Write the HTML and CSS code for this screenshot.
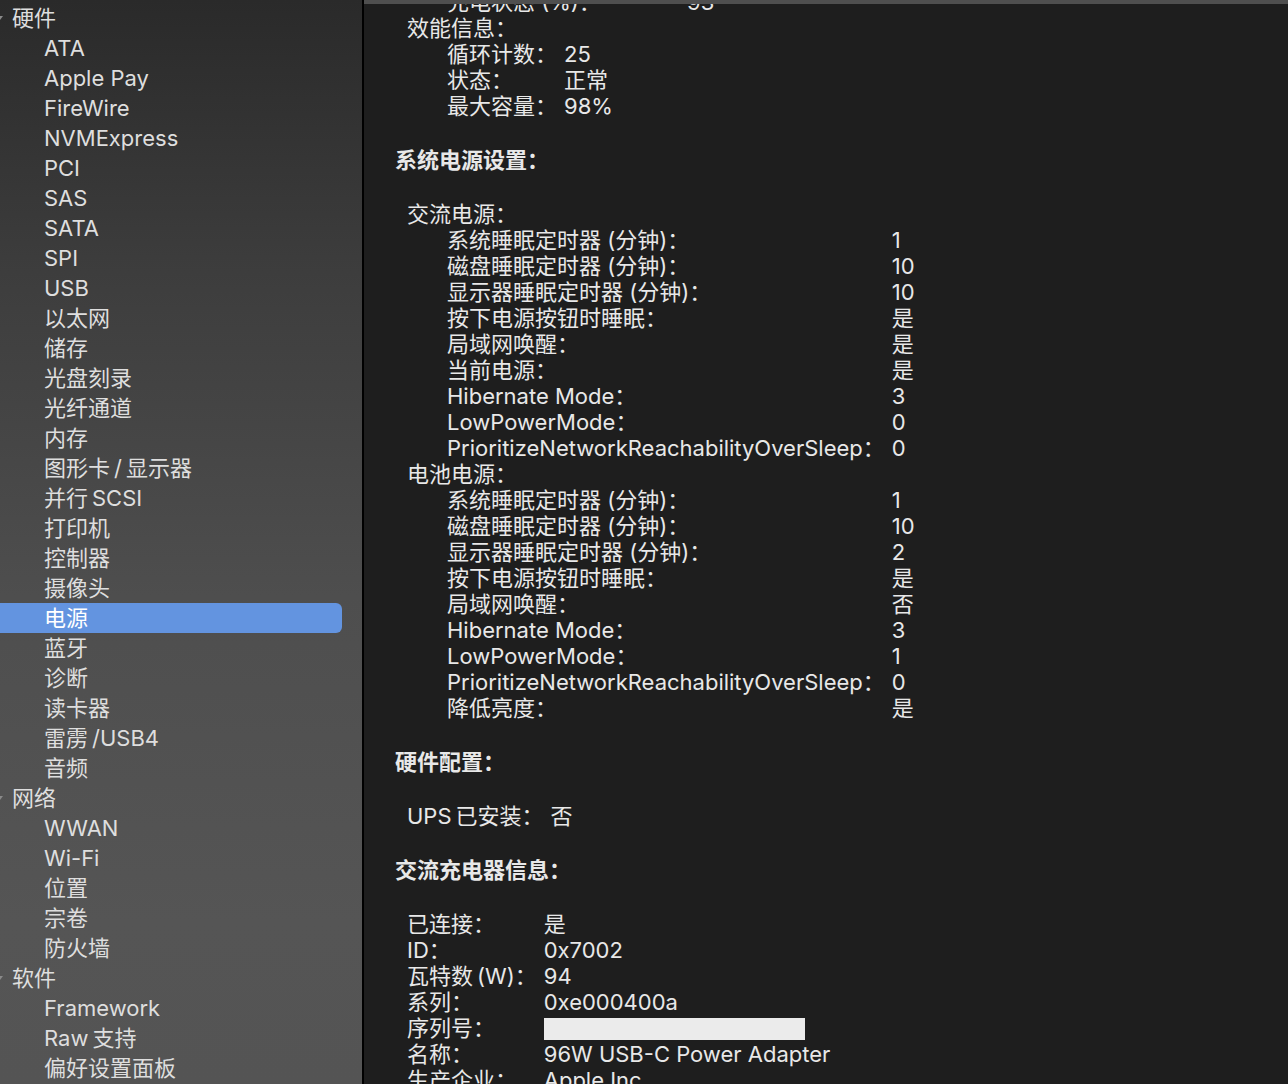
FILE: index.html
```html
<!DOCTYPE html>
<html lang="zh-CN">

<head>
    <meta charset="UTF-8">
    <title>系统信息 – 电源</title>
    <link rel="stylesheet" href="styles.css">
</head>

<body>

    <div class="window">
        <nav class="sidebar">
            <div class="row head"><span class="tri"></span>硬件</div>
            <div class="row">ATA</div>
            <div class="row">Apple Pay</div>
            <div class="row">FireWire</div>
            <div class="row">NVMExpress</div>
            <div class="row">PCI</div>
            <div class="row">SAS</div>
            <div class="row">SATA</div>
            <div class="row">SPI</div>
            <div class="row">USB</div>
            <div class="row">以太网</div>
            <div class="row">储存</div>
            <div class="row">光盘刻录</div>
            <div class="row">光纤通道</div>
            <div class="row">内存</div>
            <div class="row">图形卡&thinsp;/&thinsp;显示器</div>
            <div class="row">并行&thinsp;SCSI</div>
            <div class="row">打印机</div>
            <div class="row">控制器</div>
            <div class="row">摄像头</div>
            <div class="row selected">电源</div>
            <div class="row">蓝牙</div>
            <div class="row">诊断</div>
            <div class="row">读卡器</div>
            <div class="row">雷雳&thinsp;/USB4</div>
            <div class="row">音频</div>
            <div class="row head"><span class="tri"></span>网络</div>
            <div class="row">WWAN</div>
            <div class="row">Wi-Fi</div>
            <div class="row">位置</div>
            <div class="row">宗卷</div>
            <div class="row">防火墙</div>
            <div class="row head"><span class="tri"></span>软件</div>
            <div class="row">Framework</div>
            <div class="row">Raw&thinsp;支持</div>
            <div class="row">偏好设置面板</div>
        </nav>

        <div class="divider"></div>

        <main class="content">
            <div class="topbar"></div>

            <div class="report">
                <div class="kv lvl2 charge">
                    <span>充电状态 (%)：</span><span>93</span>
                </div>
                <div class="lvl1">效能信息：</div>
                <div class="kv lvl2">
                    <span>循环计数：</span><span>25</span>
                    <span>状态：</span><span>正常</span>
                    <span>最大容量：</span><span>98%</span>
                </div>

                <div class="title gap">系统电源设置：</div>

                <div class="lvl1 gap">交流电源：</div>
                <div class="kv lvl2">
                    <span>系统睡眠定时器 (分钟)：</span><span>1</span>
                    <span>磁盘睡眠定时器 (分钟)：</span><span>10</span>
                    <span>显示器睡眠定时器 (分钟)：</span><span>10</span>
                    <span>按下电源按钮时睡眠：</span><span>是</span>
                    <span>局域网唤醒：</span><span>是</span>
                    <span>当前电源：</span><span>是</span>
                    <span>Hibernate Mode：</span><span>3</span>
                    <span>LowPowerMode：</span><span>0</span>
                    <span>PrioritizeNetworkReachabilityOverSleep：</span><span>0</span>
                </div>
                <div class="lvl1">电池电源：</div>
                <div class="kv lvl2">
                    <span>系统睡眠定时器 (分钟)：</span><span>1</span>
                    <span>磁盘睡眠定时器 (分钟)：</span><span>10</span>
                    <span>显示器睡眠定时器 (分钟)：</span><span>2</span>
                    <span>按下电源按钮时睡眠：</span><span>是</span>
                    <span>局域网唤醒：</span><span>否</span>
                    <span>Hibernate Mode：</span><span>3</span>
                    <span>LowPowerMode：</span><span>1</span>
                    <span>PrioritizeNetworkReachabilityOverSleep：</span><span>0</span>
                    <span>降低亮度：</span><span>是</span>
                </div>

                <div class="title gap">硬件配置：</div>
                <div class="kv lvl1 gap">
                    <span>UPS&thinsp;已安装：</span><span>否</span>
                </div>

                <div class="title gap">交流充电器信息：</div>
                <div class="kv lvl1 gap">
                    <span>已连接：</span><span>是</span>
                    <span>ID：</span><span>0x7002</span>
                    <span>瓦特数&thinsp;(W)：</span><span>94</span>
                    <span>系列：</span><span>0xe000400a</span>
                    <span>序列号：</span><span><i class="redacted"></i></span>
                    <span>名称：</span><span>96W USB-C Power Adapter</span>
                    <span>生产企业：</span><span>Apple Inc.</span>
                </div>
            </div>
        </main>
    </div>

</body>

</html>
```

FILE: styles.css
```css
body {
    margin: 0;
    background: #1e1e1e;
    font-family: Inter, "Noto Sans CJK SC", sans-serif;
    font-size: 22px;
    overflow: hidden;
}

.window {
    display: flex;
    height: 1084px;
    overflow: hidden;
}

/* left source list */
.sidebar {
    flex: none;
    width: 362px;
    box-sizing: border-box;
    padding: 3px 20px 0 0;
    background: linear-gradient(#2a2a2a 0, #3d3d3d 25%, #4e4e4e 55%, #555 85%, #545454 100%);
    color: #dedede;
}

.row {
    height: 30px;
    line-height: 30px;
    padding-left: 44px;
    white-space: nowrap;
}

.row.head {
    padding-left: 12px;
    position: relative;
}

.tri {
    position: absolute;
    left: -3px;
    top: 13px;
    width: 0;
    height: 0;
    border-left: 3px solid transparent;
    border-right: 3px solid transparent;
    border-top: 4px solid #8a8a8a;
}

.row.selected {
    background: #6394e0;
    color: #fff;
    border-radius: 0 6px 6px 0;
}

.divider {
    flex: none;
    width: 2px;
    background: #000;
}

/* right report pane */
.content {
    flex: 1;
    position: relative;
    overflow: hidden;
    color: #e8e8e8;
}

.topbar {
    position: absolute;
    left: 0;
    right: 0;
    top: 0;
    height: 4px;
    background: #4f4f4f;
    z-index: 1;
}

.report {
    margin-top: -11px;
    padding-left: 31px;
    line-height: 26px;
    white-space: nowrap;
}

.title {
    font-weight: 700;
}

.lvl1 {
    padding-left: 12px;
}

.lvl2 {
    padding-left: 52px;
}

.gap {
    margin-top: 28px;
}

.kv {
    display: grid;
    grid-template-columns: max-content max-content;
    column-gap: 7px;
}

.kv.charge {
    grid-template-columns: 233px max-content;
}

.redacted {
    display: inline-block;
    width: 261px;
    height: 22px;
    background: #ebebeb;
    vertical-align: -4px;
}
```
